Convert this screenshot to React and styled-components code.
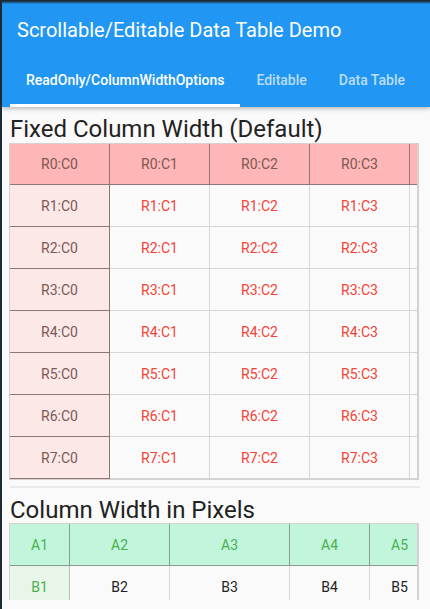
import React from 'react';
import styled, { createGlobalStyle } from 'styled-components';

const Global = createGlobalStyle`
  html, body {
    margin: 0;
    padding: 0;
    background: #1d2935;
    font-family: Roboto, "Noto Sans", Arial, sans-serif;
  }
`

const Screen = styled.div`
  margin-left: 2px;
  width: 428px;
  height: 609px;
  background: #fafafa;
  display: flex;
  flex-direction: column;
  overflow: hidden;
`

const AppBar = styled.header`
  background: linear-gradient(#1d2935 0px, #1d2935 1px, #2196f3 4px);
  color: #fff;
  box-shadow: 0 2px 4px rgba(0, 0, 0, 0.25);
  position: relative;
  z-index: 1;
`

const Title = styled.h1`
  margin: 0;
  height: 56px;
  padding: 4px 0 0 15px;
  box-sizing: border-box;
  display: flex;
  align-items: center;
  font-size: 20px;
  font-weight: 400;
`

const Tabs = styled.nav`
  display: flex;
  height: 51px;
  padding-left: 8px;
`

const Tab = styled.div`
  box-sizing: border-box;
  height: 51px;
  padding: 0 16px;
  display: flex;
  align-items: center;
  font-size: 14px;
  font-weight: 500;
  color: ${p => (p.active ? '#fff' : 'rgba(255,255,255,0.7)')};
  border-bottom: 3px solid ${p => (p.active ? '#fff' : 'transparent')};
`

const Body = styled.main`
  height: 493px;
  overflow: hidden;
  padding: 0 9px 0 7px;
`

const Heading = styled.h2`
  margin: 0;
  padding: 8px 0 0 1px;
  height: ${p => p.h}px;
  box-sizing: border-box;
  font-size: 24px;
  font-weight: 400;
  color: #222;
  line-height: 28px;
  white-space: nowrap;
`

const Scroller = styled.div`
  width: 410px;
  overflow: hidden;
  border: 1px solid #d8d0ce;
  border-right-width: 2px;
  box-sizing: border-box;
`

const Row = styled.div`
  display: flex;
  width: max-content;
`

const Cell = styled.div`
  flex: none;
  box-sizing: border-box;
  width: ${p => p.w}px;
  height: ${p => p.h || 42}px;
  display: flex;
  align-items: center;
  justify-content: center;
  font-size: 14px;
  color: ${p => p.fg};
  background: ${p => p.bg};
  border-right: 1px solid ${p => p.line};
  border-bottom: 1px solid ${p => p.line};
`

const Divider = styled.hr`
  margin: 6px 0 0 1px;
  width: 410px;
  border: none;
  border-top: 2px solid #ebebeb;
`

const fixedCols = [0, 1, 2, 3, 4]

function FixedTable() {
  const rows = [0, 1, 2, 3, 4, 5, 6, 7]
  return (
    <Scroller>
      {rows.map(r => (
        <Row key={r}>
          {fixedCols.map(c => {
            const head = r === 0
            const first = c === 0
            return (
              <Cell
                key={c}
                w={100}
                h={r === 0 ? 41 : 42}
                bg={head ? '#ffb6b6' : first ? '#fde8e8' : '#fafafa'}
                fg={head || first ? '#7b5954' : '#f44336'}
                line={head || first ? '#8f7676' : '#d5d5d5'}
              >
                {c < 4 ? `R${r}:C${c}` : ''}
              </Cell>
            )
          })}
        </Row>
      ))}
    </Scroller>
  )
}

const pixelCols = [60, 100, 120, 80, 60]

function PixelTable() {
  return (
    <Scroller>
      <Row>
        {pixelCols.map((w, i) => (
          <Cell key={i} w={w} bg="#c1f5dc" fg="#4caf50" line="#8a9a90">
            A{i + 1}
          </Cell>
        ))}
      </Row>
      <Row>
        {pixelCols.map((w, i) => (
          <Cell
            key={i}
            w={w}
            bg={i === 0 ? '#e8f5e9' : '#fafafa'}
            fg={i === 0 ? '#4caf50' : '#222'}
            line={i === 0 ? '#b8c4ba' : '#d5d5d5'}
          >
            B{i + 1}
          </Cell>
        ))}
      </Row>
    </Scroller>
  )
}

export default function App() {
  return (
    <>
      <Global />
      <Screen>
        <AppBar>
          <Title>Scrollable/Editable Data Table Demo</Title>
          <Tabs>
            <Tab active>ReadOnly/ColumnWidthOptions</Tab>
            <Tab>Editable</Tab>
            <Tab>Data Table</Tab>
          </Tabs>
        </AppBar>
        <Body>
          <Heading h={36}>Fixed Column Width (Default)</Heading>
          <FixedTable />
          <Divider />
          <Heading h={35}>Column Width in Pixels</Heading>
          <PixelTable />
        </Body>
      </Screen>
    </>
  )
}
